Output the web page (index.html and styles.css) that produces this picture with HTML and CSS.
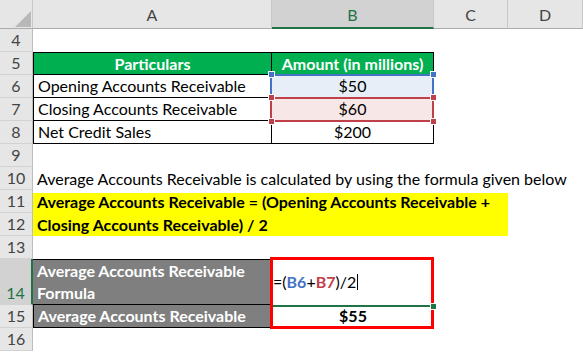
FILE: index.html
```html
<!DOCTYPE html>
<html>
<head>
<meta charset="utf-8">
<link rel="stylesheet" href="styles.css">
</head>
<body>
<div class="sheet">
  <div class="corner"><svg class="tri" width="33" height="29" viewBox="0 0 33 29"><polygon points="15,27 31,27 31,11" fill="#b8b8b8"/></svg></div>
  <div class="ch">A</div>
  <div class="ch sel">B</div>
  <div class="ch">C</div>
  <div class="ch">D</div>

  <div class="rh">4</div><div class="c span"></div>

  <div class="rh">5</div>
  <div class="c hd first">Particulars</div>
  <div class="c hd">Amount (in millions)</div>
  <div class="c span2"></div>

  <div class="rh">6</div>
  <div class="c tb first">Opening Accounts Receivable</div>
  <div class="c tb num ref blue"><span class="refbox"></span><span class="hdl tl"></span><span class="hdl tr"></span>$50</div>
  <div class="c span2"></div>

  <div class="rh">7</div>
  <div class="c tb first">Closing Accounts Receivable</div>
  <div class="c tb num ref red"><span class="refbox"></span><span class="hdl tl"></span><span class="hdl tr"></span><span class="hdl bl"></span><span class="hdl br"></span>$60</div>
  <div class="c span2"></div>

  <div class="rh">8</div>
  <div class="c tb first">Net Credit Sales</div>
  <div class="c tb num">$200</div>
  <div class="c span2"></div>

  <div class="rh">9</div><div class="c span"></div>

  <div class="rh">10</div><div class="c span">Average Accounts Receivable is calculated by using the formula given below</div>

  <div class="rh">11</div>
  <div class="c yellow">
    <div class="yl">Average Accounts Receivable = (Opening Accounts Receivable +</div>
    <div class="yl">Closing Accounts Receivable) / 2</div>
  </div>
  <div class="c"></div>
  <div class="rh">12</div>
  <div class="c"></div>

  <div class="rh">13</div><div class="c span"></div>

  <div class="rh sel">14</div>
  <div class="c gray tall"><div>Average Accounts Receivable</div><div>Formula</div></div>
  <div class="c formula">=(<span class="rb">B6</span>+<span class="rr">B7</span>)/2<span class="caret"></span><span class="active-line"></span></div>
  <div class="c span2"></div>

  <div class="rh">15</div>
  <div class="c gray g15">Average Accounts Receivable</div>
  <div class="c result">$55</div>
  <div class="c span2"></div>

  <div class="rh">16</div><div class="c span"></div>

  <div class="redbox"></div>
  <div class="fill-handle"></div>
</div>
</body>
</html>
```

FILE: styles.css
```css
* { box-sizing: border-box; margin: 0; padding: 0; }
body {
  margin: 0;
  background: #fff;
  font-family: Lato, "Liberation Sans", sans-serif;
  font-size: 16px;
  color: #000;
}
.sheet {
  position: relative;
  display: grid;
  grid-template-columns: 33px 239px 162px 74px 75px;
  grid-template-rows: 29px repeat(10, 23px) 46px 23px 23px;
  width: 583px;
  height: 352px;
  overflow: hidden;
}
.corner {
  background: #e6e6e6;
  border-right: 1px solid #c8c8c8;
  border-bottom: 1px solid #ababab;
}
.tri { display: block; }
.ch {
  background: #e6e6e6;
  border-right: 1px solid #c8c8c8;
  border-bottom: 1px solid #ababab;
  display: flex;
  align-items: center;
  justify-content: center;
  color: #444;
  font-size: 16px;
  padding-top: 1px;
}
.ch.sel {
  background: #d2d2d2;
  color: #217346;
  border-bottom: 2px solid #217346;
  padding-top: 2px;
}
.rh {
  background: #e6e6e6;
  border-right: 1px solid #bdbdbd;
  border-bottom: 1px solid #d2d2d2;
  text-align: center;
  line-height: 22px;
  color: #444;
}
.rh.sel {
  background: #d2d2d2;
  color: #217346;
  border-right: 2px solid #217346;
  display: flex;
  align-items: flex-end;
  justify-content: center;
}
.c {
  line-height: 23px;
  padding: 0 4px;
  white-space: nowrap;
}
.span { grid-column: 2 / -1; }
.span2 { grid-column: 4 / -1; }

.hd {
  background: #00b050;
  color: #fff;
  font-weight: bold;
  text-align: center;
  border-top: 1px solid #000;
  border-right: 1px solid #000;
  border-bottom: 1px solid #000;
  line-height: 21px;
}
.first { border-left: 1px solid #000; }
.tb {
  border-right: 1px solid #000;
  border-bottom: 1px solid #000;
  line-height: 22px;
}
.num { text-align: center; }

.ref { position: relative; }
.ref.blue { background: #e7eef8; }
.ref.red { background: #f8e7e7; }
.refbox {
  position: absolute;
  left: -2px;
  right: -1px;
  top: -1px;
  bottom: -2px;
  border: 2px solid;
}
.blue .refbox { border-color: #4472c4; }
.red .refbox { border-color: #c0404a; }
.hdl {
  position: absolute;
  width: 5px;
  height: 5px;
  box-shadow: 0 0 0 1px #fff;
  z-index: 2;
}
.blue .hdl { background: #4472c4; }
.red .hdl { background: #c0404a; }
.hdl.tl { left: -3px; top: -3px; }
.hdl.tr { right: -3px; top: -3px; }
.hdl.bl { left: -3px; bottom: -4px; }
.hdl.br { right: -3px; bottom: -4px; }

.yellow {
  grid-column: 2 / 5;
  grid-row: span 2;
  background: #ffff00;
  box-shadow: inset 0 3px 0 #fff;
  font-weight: bold;
  display: flex;
  flex-direction: column;
}
.yl { line-height: 23px; }

.gray {
  background: #7f7f7f;
  color: #fff;
  font-weight: bold;
  border-bottom: 1px solid #000;
}
.tall {
  border-top: 1px solid #000;
  display: flex;
  flex-direction: column;
  justify-content: flex-end;
  line-height: 22px;
}
.g15 { border-left: 1px solid #000; line-height: 22px; }

.formula {
  position: relative;
  padding-left: 1px;
  display: flex;
  align-items: center;
  line-height: 20px;
}
.rb { color: #4472c4; font-weight: bold; }
.rr { color: #c0404a; font-weight: bold; }
.caret {
  display: inline-block;
  width: 1px;
  height: 16px;
  background: #000;
  margin-left: 1px;
}
.active-line {
  position: absolute;
  left: 0;
  right: 0;
  bottom: -2px;
  height: 2px;
  background: #217346;
}
.result {
  text-align: center;
  font-weight: bold;
  line-height: 22px;
}

.redbox {
  position: absolute;
  left: 270px;
  top: 257px;
  width: 164px;
  height: 72px;
  border: 3px solid #ff0000;
}
.fill-handle {
  position: absolute;
  left: 431px;
  top: 304px;
  width: 5px;
  height: 5px;
  background: #217346;
  box-shadow: 0 0 0 1px #fff;
}
```
